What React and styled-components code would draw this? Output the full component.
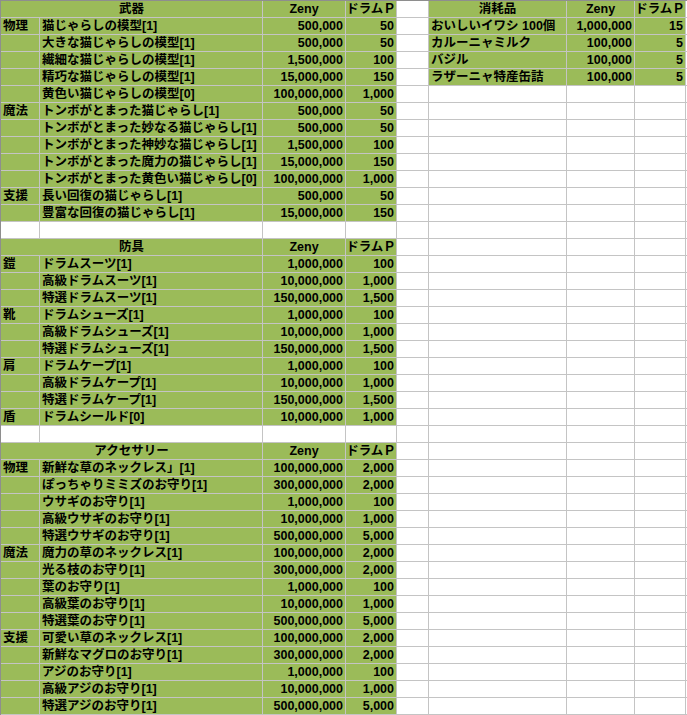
import React from "react";
import styled, { createGlobalStyle } from "styled-components";

const GlobalStyle = createGlobalStyle`
  html, body { margin: 0; padding: 0; background: #ffffff; }
  body { font-family: "Liberation Sans", "Noto Sans CJK JP", sans-serif; }
`;

const Sheet = styled.div`
  display: grid;
  grid-template-columns: 38px 222px 82px 50px 31px 137px 67px 50px 1fr;
  grid-auto-rows: 16px;
  gap: 1px;
  background: #c4c4c4;
  border-top: 1px solid #8e8e8e;
  border-left: 1px solid #8e8e8e;
  padding-bottom: 1px;
  width: 686px;
  overflow: hidden;
`;

const Cell = styled.div`
  grid-column: span ${(p) => p.$span || 1};
  background: ${(p) => (p.$green ? "#9bbb59" : "#ffffff")};
  color: #000000;
  font-family: "Liberation Sans", "Noto Sans CJK JP", sans-serif;
  font-weight: 700;
  font-size: 12.5px;
  line-height: 16px;
  white-space: nowrap;
  overflow: hidden;
  text-align: ${(p) => p.$align || "left"};
  padding: 0 ${(p) => (p.$align === "right" ? "2px" : "0")} 0
    ${(p) => (p.$align === "left" || !p.$align ? "2px" : "0")};
`;

const H = (title) => ({ type: "header", title });
const B = { type: "blank" };
const R = (cat, name, zeny, p) => ({ type: "row", cat, name, zeny, p });

const leftRows = [
  H("武器"),
  R("物理", "猫じゃらしの模型[1]", "500,000", "50"),
  R("", "大きな猫じゃらしの模型[1]", "500,000", "50"),
  R("", "繊細な猫じゃらしの模型[1]", "1,500,000", "100"),
  R("", "精巧な猫じゃらしの模型[1]", "15,000,000", "150"),
  R("", "黄色い猫じゃらしの模型[0]", "100,000,000", "1,000"),
  R("魔法", "トンボがとまった猫じゃらし[1]", "500,000", "50"),
  R("", "トンボがとまった妙なる猫じゃらし[1]", "500,000", "50"),
  R("", "トンボがとまった神妙な猫じゃらし[1]", "1,500,000", "100"),
  R("", "トンボがとまった魔力の猫じゃらし[1]", "15,000,000", "150"),
  R("", "トンボがとまった黄色い猫じゃらし[0]", "100,000,000", "1,000"),
  R("支援", "長い回復の猫じゃらし[1]", "500,000", "50"),
  R("", "豊富な回復の猫じゃらし[1]", "15,000,000", "150"),
  B,
  H("防具"),
  R("鎧", "ドラムスーツ[1]", "1,000,000", "100"),
  R("", "高級ドラムスーツ[1]", "10,000,000", "1,000"),
  R("", "特選ドラムスーツ[1]", "150,000,000", "1,500"),
  R("靴", "ドラムシューズ[1]", "1,000,000", "100"),
  R("", "高級ドラムシューズ[1]", "10,000,000", "1,000"),
  R("", "特選ドラムシューズ[1]", "150,000,000", "1,500"),
  R("肩", "ドラムケープ[1]", "1,000,000", "100"),
  R("", "高級ドラムケープ[1]", "10,000,000", "1,000"),
  R("", "特選ドラムケープ[1]", "150,000,000", "1,500"),
  R("盾", "ドラムシールド[0]", "10,000,000", "1,000"),
  B,
  H("アクセサリー"),
  R("物理", "新鮮な草のネックレス」[1]", "100,000,000", "2,000"),
  R("", "ぽっちゃりミミズのお守り[1]", "300,000,000", "2,000"),
  R("", "ウサギのお守り[1]", "1,000,000", "100"),
  R("", "高級ウサギのお守り[1]", "10,000,000", "1,000"),
  R("", "特選ウサギのお守り[1]", "500,000,000", "5,000"),
  R("魔法", "魔力の草のネックレス[1]", "100,000,000", "2,000"),
  R("", "光る枝のお守り[1]", "300,000,000", "2,000"),
  R("", "葉のお守り[1]", "1,000,000", "100"),
  R("", "高級葉のお守り[1]", "10,000,000", "1,000"),
  R("", "特選葉のお守り[1]", "500,000,000", "5,000"),
  R("支援", "可愛い草のネックレス[1]", "100,000,000", "2,000"),
  R("", "新鮮なマグロのお守り[1]", "300,000,000", "2,000"),
  R("", "アジのお守り[1]", "1,000,000", "100"),
  R("", "高級アジのお守り[1]", "10,000,000", "1,000"),
  R("", "特選アジのお守り[1]", "500,000,000", "5,000"),
];

const rightRows = [
  H("消耗品"),
  R(null, "おいしいイワシ 100個", "1,000,000", "15"),
  R(null, "カルーニャミルク", "100,000", "5"),
  R(null, "バジル", "100,000", "5"),
  R(null, "ラザーニャ特産缶詰", "100,000", "5"),
];

function LeftPart({ row }) {
  if (row.type === "header") {
    return (
      <>
        <Cell $green $span={2} $align="center">{row.title}</Cell>
        <Cell $green $align="center">Zeny</Cell>
        <Cell $green $align="center">ドラムＰ</Cell>
      </>
    );
  }
  if (row.type === "row") {
    return (
      <>
        <Cell $green>{row.cat}</Cell>
        <Cell $green>{row.name}</Cell>
        <Cell $green $align="right">{row.zeny}</Cell>
        <Cell $green $align="right">{row.p}</Cell>
      </>
    );
  }
  return (
    <>
      <Cell />
      <Cell />
      <Cell />
      <Cell />
    </>
  );
}

function RightPart({ row }) {
  if (row && row.type === "header") {
    return (
      <>
        <Cell $green $align="center">{row.title}</Cell>
        <Cell $green $align="center">Zeny</Cell>
        <Cell $green $align="center">ドラムＰ</Cell>
      </>
    );
  }
  if (row) {
    return (
      <>
        <Cell $green>{row.name}</Cell>
        <Cell $green $align="right">{row.zeny}</Cell>
        <Cell $green $align="right">{row.p}</Cell>
      </>
    );
  }
  return (
    <>
      <Cell />
      <Cell />
      <Cell />
    </>
  );
}

export default function App() {
  return (
    <>
      <GlobalStyle />
      <Sheet>
        {leftRows.map((row, i) => (
          <React.Fragment key={i}>
            <LeftPart row={row} />
            <Cell />
            <RightPart row={rightRows[i]} />
            <Cell />
          </React.Fragment>
        ))}
      </Sheet>
    </>
  );
}
